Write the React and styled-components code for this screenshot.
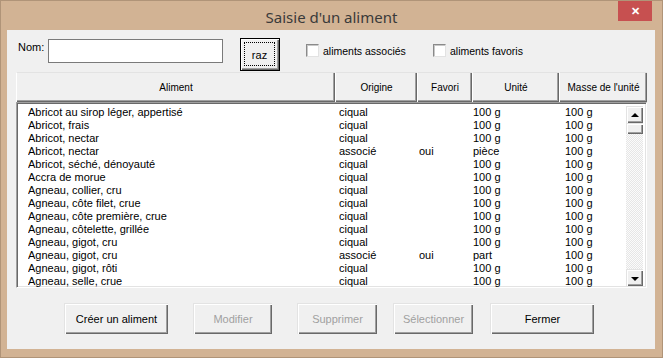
import React from "react";
import styled, { createGlobalStyle } from "styled-components";

const GlobalStyle = createGlobalStyle`
  html, body {
    margin: 0;
    padding: 0;
    background: #d2b394;
  }
  body {
    font-family: "Liberation Sans", Arial, sans-serif;
  }
`;

const rows = [
  ["Abricot au sirop léger, appertisé", "ciqual", "", "100 g", "100 g"],
  ["Abricot, frais", "ciqual", "", "100 g", "100 g"],
  ["Abricot, nectar", "ciqual", "", "100 g", "100 g"],
  ["Abricot, nectar", "associé", "oui", "pièce", "100 g"],
  ["Abricot, séché, dénoyauté", "ciqual", "", "100 g", "100 g"],
  ["Accra de morue", "ciqual", "", "100 g", "100 g"],
  ["Agneau, collier, cru", "ciqual", "", "100 g", "100 g"],
  ["Agneau, côte filet, crue", "ciqual", "", "100 g", "100 g"],
  ["Agneau, côte première, crue", "ciqual", "", "100 g", "100 g"],
  ["Agneau, côtelette, grillée", "ciqual", "", "100 g", "100 g"],
  ["Agneau, gigot, cru", "ciqual", "", "100 g", "100 g"],
  ["Agneau, gigot, cru", "associé", "oui", "part", "100 g"],
  ["Agneau, gigot, rôti", "ciqual", "", "100 g", "100 g"],
  ["Agneau, selle, crue", "ciqual", "", "100 g", "100 g"],
];

const columns = [
  { label: "Aliment", width: 319 },
  { label: "Origine", width: 82 },
  { label: "Favori", width: 55 },
  { label: "Unité", width: 87 },
  { label: "Masse de l'unité", width: 88 },
];

const buttons = [
  { label: "Créer un aliment", width: 104, ml: 57 },
  { label: "Modifier", width: 79, ml: 25, disabled: true },
  { label: "Supprimer", width: 80, ml: 25, disabled: true },
  { label: "Sélectionner", width: 80, ml: 16, disabled: true },
  { label: "Fermer", width: 104, ml: 17 },
];

const App = () => {
  return (
    <>
      <GlobalStyle />
      <Window>
        <TitleBar>
          <Title>Saisie d'un aliment</Title>
          <CloseButton>✕</CloseButton>
        </TitleBar>
        <Client>
          <TopRow>
            <NomLabel>Nom:</NomLabel>
            <TextInput />
            <RazButton>
              <FocusRect>raz</FocusRect>
            </RazButton>
            <CheckGroup $width={127} $ml={26}>
              <CheckBox />
              <span>aliments associés</span>
            </CheckGroup>
            <CheckGroup>
              <CheckBox />
              <span>aliments favoris</span>
            </CheckGroup>
          </TopRow>

          <HeaderRow>
            {columns.map((c) => (
              <HeaderCell key={c.label} $width={c.width}>
                {c.label}
              </HeaderCell>
            ))}
          </HeaderRow>

          <ListBox>
            <Rows>
              {rows.map((r, i) => (
                <Row key={i}>
                  {r.map((cell, j) => (
                    <Cell key={j}>{cell}</Cell>
                  ))}
                </Row>
              ))}
            </Rows>
            <ScrollBar>
              <ArrowButton>
                <Triangle />
              </ArrowButton>
              <Thumb />
              <Track />
              <ArrowButton>
                <Triangle $down />
              </ArrowButton>
            </ScrollBar>
          </ListBox>

          <ButtonRow>
            {buttons.map((b) => (
              <PushButton
                key={b.label}
                $width={b.width}
                $ml={b.ml}
                $disabled={b.disabled}
              >
                {b.label}
              </PushButton>
            ))}
          </ButtonRow>
        </Client>
      </Window>
    </>
  );
};

const Window = styled.div`
  width: 663px;
  height: 358px;
  box-sizing: border-box;
  background: #d2b394;
  border: 1px solid #b09478;
  display: flex;
  flex-direction: column;
`;

const TitleBar = styled.div`
  position: relative;
  height: 29px;
  display: flex;
  align-items: center;
  justify-content: center;
`;

const Title = styled.div`
  font-family: "Noto Sans", "Open Sans", sans-serif;
  font-size: 15px;
  color: #3a3a3a;
  margin-top: 2px;
`;

const CloseButton = styled.div`
  position: absolute;
  top: 0;
  right: 10px;
  width: 34px;
  height: 20px;
  background: #c75050;
  color: #fff;
  font-size: 11px;
  font-weight: bold;
  display: flex;
  align-items: center;
  justify-content: center;
`;

const Client = styled.div`
  margin: 0 7px 8px 6px;
  flex: 1;
  background: #f0f0f0;
  display: flex;
  flex-direction: column;
  font-size: 11px;
  color: #000;
`;

const TopRow = styled.div`
  height: 42px;
  box-sizing: border-box;
  padding: 8px 0 0 11px;
  display: flex;
  align-items: flex-start;
`;

const NomLabel = styled.div`
  width: 30px;
  margin-top: 3px;
  color: #000;
`;

const TextInput = styled.div`
  width: 175px;
  height: 24px;
  box-sizing: border-box;
  margin-top: 1px;
  background: #fff;
  border: 1px solid #7a7a7a;
`;

const RazButton = styled.div`
  margin-left: 17px;
  width: 40px;
  height: 33px;
  box-sizing: border-box;
  border: 1px solid #000;
  background: #f0f0f0;
  box-shadow: inset 1px 1px #fff, inset -1px -1px #696969,
    inset -2px -2px #a0a0a0;
  display: flex;
  padding: 3px 4px 4px 3px;
`;

const FocusRect = styled.div`
  flex: 1;
  border: 1px dotted #000;
  display: flex;
  align-items: center;
  justify-content: center;
  font-size: 11px;
  padding-top: 1px;
`;

const CheckGroup = styled.div`
  width: ${(p) => (p.$width ? `${p.$width}px` : "auto")};
  margin-left: ${(p) => (p.$ml ? `${p.$ml}px` : "0")};
  margin-top: 6px;
  display: flex;
  align-items: center;
  gap: 4px;
  font-size: 10.5px;
`;

const CheckBox = styled.div`
  width: 13px;
  height: 13px;
  box-sizing: border-box;
  background: #fff;
  border: 1px solid;
  border-color: #8a8a8a #e2e2e2 #e2e2e2 #8a8a8a;
  box-shadow: inset 1px 1px #c8c8c8;
`;

const HeaderRow = styled.div`
  margin-left: 9px;
  width: 631px;
  height: 30px;
  display: flex;
`;

const HeaderCell = styled.div`
  width: ${(p) => p.$width}px;
  box-sizing: border-box;
  background: #f0f0f0;
  border-top: 1px solid #e3e3e3;
  border-left: 1px solid #fff;
  box-shadow: inset -1px -1px #696969, inset -2px -2px #a0a0a0;
  display: flex;
  align-items: center;
  justify-content: center;
  font-size: 10px;
  white-space: nowrap;
`;

const ListBox = styled.div`
  margin-left: 9px;
  width: 631px;
  height: 186px;
  box-sizing: border-box;
  background: #fff;
  border: 1px solid;
  border-color: #a0a0a0 #fff #fff #a0a0a0;
  box-shadow: inset 1px 1px #696969, inset -1px -1px #e3e3e3;
  display: flex;
  padding: 2px 2px 1px 2px;
`;

const Rows = styled.div`
  flex: 1;
  padding-left: 9px;
  padding-top: 1px;
`;

const Row = styled.div`
  height: 13px;
  display: grid;
  grid-template-columns: 311px 80px 54px 92px 1fr;
  align-items: center;
  line-height: 13px;
  font-size: 11px;
  white-space: nowrap;
`;

const Cell = styled.div`
  overflow: hidden;
`;

const ScrollBar = styled.div`
  width: 17px;
  margin-right: 1px;
  display: flex;
  flex-direction: column;
  padding-top: 1px;
`;

const raised = `
  background: #f0f0f0;
  box-sizing: border-box;
  border-top: 1px solid #e3e3e3;
  border-left: 1px solid #e3e3e3;
  box-shadow: inset 1px 1px #fff, inset -1px -1px #696969, inset -2px -2px #a0a0a0;
`;

const ArrowButton = styled.div`
  ${raised}
  height: 17px;
  display: flex;
  align-items: center;
  justify-content: center;
`;

const Triangle = styled.div`
  width: 0;
  height: 0;
  border-left: 4px solid transparent;
  border-right: 4px solid transparent;
  ${(p) =>
    p.$down
      ? "border-top: 4px solid #000; margin-top: 1px;"
      : "border-bottom: 4px solid #000; margin-top: -1px;"}
`;

const Thumb = styled.div`
  ${raised}
  height: 11px;
`;

const Track = styled.div`
  flex: 1;
  background-color: #f4f4f4;
  background-image: repeating-conic-gradient(#e6e6e6 0 25%, #fbfbfb 0 50%);
  background-size: 2px 2px;
`;

const ButtonRow = styled.div`
  margin-top: 15px;
  height: 31px;
  display: flex;
`;

const PushButton = styled.div`
  ${raised}
  width: ${(p) => p.$width}px;
  margin-left: ${(p) => p.$ml}px;
  height: 31px;
  display: flex;
  align-items: center;
  justify-content: center;
  font-size: 11px;
  color: ${(p) => (p.$disabled ? "#a0a0a0" : "#000")};
`;

export default App;
